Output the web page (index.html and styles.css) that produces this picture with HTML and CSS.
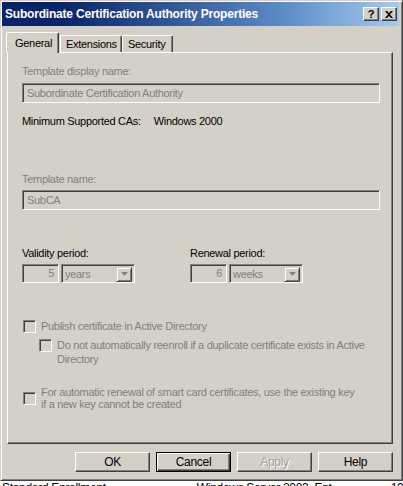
FILE: index.html
```html
<!DOCTYPE html>
<html>
<head>
<meta charset="utf-8">
<link rel="stylesheet" href="styles.css">
</head>
<body>
<div class="window">
  <div class="titlebar">
    <span class="title">Subordinate Certification Authority Properties</span>
    <div class="tbtns">
      <span class="tbtn q">?</span>
      <span class="tbtn x"><svg width="8" height="7" viewBox="0 0 8 7"><path d="M0 0h2l2 2 2-2h2L5 3.5 8 7H6L4 5 2 7H0l3-3.5z" fill="#000"/></svg></span>
    </div>
  </div>
  <div class="body">
    <div class="tabs">
      <div class="tab active">General</div>
      <div class="tab">Extensions</div>
      <div class="tab">Security</div>
    </div>
    <div class="panel">
      <div class="lbl dis l1">Template display name:</div>
      <div class="edit wide">Subordinate Certification Authority</div>
      <div class="lbl min">Minimum Supported CAs:<span class="minval">Windows 2000</span></div>
      <div class="lbl dis l2">Template name:</div>
      <div class="edit wide e2">SubCA</div>
      <div class="periods">
        <div class="period">
          <div class="lbl">Validity period:</div>
          <div class="pctl">
            <div class="edit num">5</div>
            <div class="combo"><span class="ctext">years</span><span class="dd"><svg width="7" height="5" viewBox="0 0 7 5"><path d="M0 0h7L3.5 4z" fill="#808080"/><path d="M4 4.5h1" stroke="#fff"/></svg></span></div>
          </div>
        </div>
        <div class="period">
          <div class="lbl">Renewal period:</div>
          <div class="pctl">
            <div class="edit num">6</div>
            <div class="combo"><span class="ctext">weeks</span><span class="dd"><svg width="7" height="5" viewBox="0 0 7 5"><path d="M0 0h7L3.5 4z" fill="#808080"/><path d="M4 4.5h1" stroke="#fff"/></svg></span></div>
          </div>
        </div>
      </div>
      <div class="chk c1"><span class="box"></span><span class="ctxt">Publish certificate in Active Directory</span></div>
      <div class="chk c2"><span class="box"></span><span class="ctxt">Do not automatically reenroll if a duplicate certificate exists in Active Directory</span></div>
      <div class="chk c3"><span class="box"></span><span class="ctxt">For automatic renewal of smart card certificates, use the existing key<br>if a new key cannot be created</span></div>
    </div>
    <div class="buttons">
      <div class="btn">OK</div>
      <div class="btn default">Cancel</div>
      <div class="btn dis">Apply</div>
      <div class="btn">Help</div>
    </div>
  </div>
</div>
<div class="behind">
  <span class="b1">Standard Enrollment</span>
  <span class="b2">Windows Server 2003, Ent</span>
  <span class="b3">10.1</span>
</div>
</body>
</html>
```

FILE: styles.css
```css
* { box-sizing: border-box; }
html, body { margin: 0; padding: 0; }
body {
  background: #fff;
  font-family: "Liberation Sans", Arial, sans-serif;
  font-size: 11px;
  letter-spacing: -0.3px;
  color: #000;
  width: 403px;
  height: 486px;
  overflow: hidden;
}
.window {
  width: 403px;
  height: 481px;
  background: #d4d0c8;
  border: 1px solid;
  border-color: #d4d0c8 #404040 #404040 #d4d0c8;
  box-shadow: inset 1px 1px 0 #fff, inset -1px -1px 0 #808080;
  padding: 1px 3px 0 1px;
}
.titlebar {
  height: 24px;
  background: linear-gradient(to right, #0a246a 0%, #0a246a 15%, #5a8ac6 70%, #a6caf0 100%);
  display: flex;
  align-items: center;
  justify-content: space-between;
  padding: 0 2px 0 3px;
}
.title {
  color: #fff;
  font-weight: bold;
  font-size: 12px;
  letter-spacing: -0.2px;
}
.tbtns { display: flex; gap: 2px; }
.tbtn {
  width: 16px;
  height: 14px;
  background: #d4d0c8;
  border: 1px solid;
  border-color: #fff #404040 #404040 #fff;
  box-shadow: inset -1px -1px 0 #808080;
  display: flex;
  align-items: center;
  justify-content: center;
  font-weight: bold;
  font-size: 11px;
  line-height: 1;
  letter-spacing: 0;
}
.body { padding: 6px 0 0 5px; }
.tabs {
  display: flex;
  align-items: flex-end;
  height: 20px;
  position: relative;
  z-index: 1;
}
.tab {
  height: 17px;
  border-top: 1px solid #fff;
  border-left: 1px solid #fff;
  border-right: 1px solid #404040;
  box-shadow: inset -1px 0 0 #808080;
  border-radius: 2px 2px 0 0;
  padding: 2px 0 0 6px;
  line-height: 13px;
  background: #d4d0c8;
}
.tab:nth-child(2) { width: 62px; margin-left: 1px; padding-left: 5px; }
.tab:nth-child(3) { width: 51px; padding-left: 5px; }
.tab.active {
  width: 53px;
  height: 21px;
  margin-left: -1px;
  margin-bottom: -1px;
  padding: 4px 0 0 8px;
}
.panel {
  width: 386px;
  height: 392px;
  border: 1px solid;
  border-color: #fff #404040 #404040 #fff;
  box-shadow: inset -1px -1px 0 #808080;
  padding: 12px 0 0 14px;
}
.lbl { line-height: 13px; height: 13px; }
.dis { color: #808080; }
.edit {
  height: 20px;
  border: 1px solid;
  border-color: #808080 #fff #fff #808080;
  box-shadow: inset 1px 1px 0 #404040, inset -1px -1px 0 #d4d0c8;
  color: #808080;
  padding: 0 4px;
  line-height: 18px;
}
.wide { width: 358px; margin-top: 5px; }
.min { margin-top: 12px; }
.minval { margin-left: 13px; }
.l2 { margin-top: 45px; }
.e2 { margin-top: 4px; }
.periods { display: flex; margin-top: 37px; }
.period { width: 168px; }
.pctl { display: flex; gap: 2px; margin-top: 4px; }
.num { width: 37px; height: 19px; text-align: right; padding: 0 4px; line-height: 17px; }
.combo {
  width: 74px;
  height: 19px;
  border: 1px solid;
  border-color: #808080 #fff #fff #808080;
  box-shadow: inset 1px 1px 0 #404040, inset -1px -1px 0 #d4d0c8;
  display: flex;
  justify-content: space-between;
  padding: 2px;
  color: #808080;
}
.ctext { line-height: 15px; padding-left: 1px; }
.dd {
  width: 16px;
  height: 15px;
  border: 1px solid;
  border-color: #d4d0c8 #404040 #404040 #d4d0c8;
  box-shadow: inset 1px 1px 0 #fff, inset -1px -1px 0 #808080;
  display: flex;
  align-items: center;
  justify-content: center;
}
.chk { display: flex; align-items: flex-start; color: #808080; }
.box {
  flex: none;
  width: 13px;
  height: 13px;
  border: 1px solid;
  border-color: #808080 #fff #fff #808080;
  box-shadow: inset 1px 1px 0 #404040, inset -1px -1px 0 #d4d0c8;
  background: #d4d0c8;
  margin: 1px 5px 0 1px;
}
.ctxt { line-height: 14px; }
.c1 { margin-top: 36px; }
.c2 { margin-top: 5px; margin-left: 16px; width: 350px; }
.c3 { margin-top: 20px; width: 350px; align-items: center; }
.c3 .ctxt { line-height: 12px; }
.c3 .box { margin-top: 0; }
.buttons {
  display: flex;
  justify-content: flex-end;
  gap: 6px;
  width: 386px;
  margin-top: 8px;
}
.btn {
  width: 75px;
  height: 20px;
  border: 1px solid;
  border-color: #fff #404040 #404040 #fff;
  box-shadow: inset -1px -1px 0 #808080;
  text-align: center;
  line-height: 18px;
  font-size: 12px;
}
.btn.default {
  border: 1px solid #000;
  box-shadow: inset 1px 1px 0 #fff, inset -1px -1px 0 #404040, inset -2px -2px 0 #808080;
}
.btn.dis { color: #a0a0a0; text-shadow: 1px 1px 0 #fff; }
.behind {
  height: 14px;
  white-space: nowrap;
  font-size: 12px;
  line-height: 14px;
}
.b1 { margin-left: 2px; }
.b2 { margin-left: 88px; }
.b3 { margin-left: 56px; }
```
